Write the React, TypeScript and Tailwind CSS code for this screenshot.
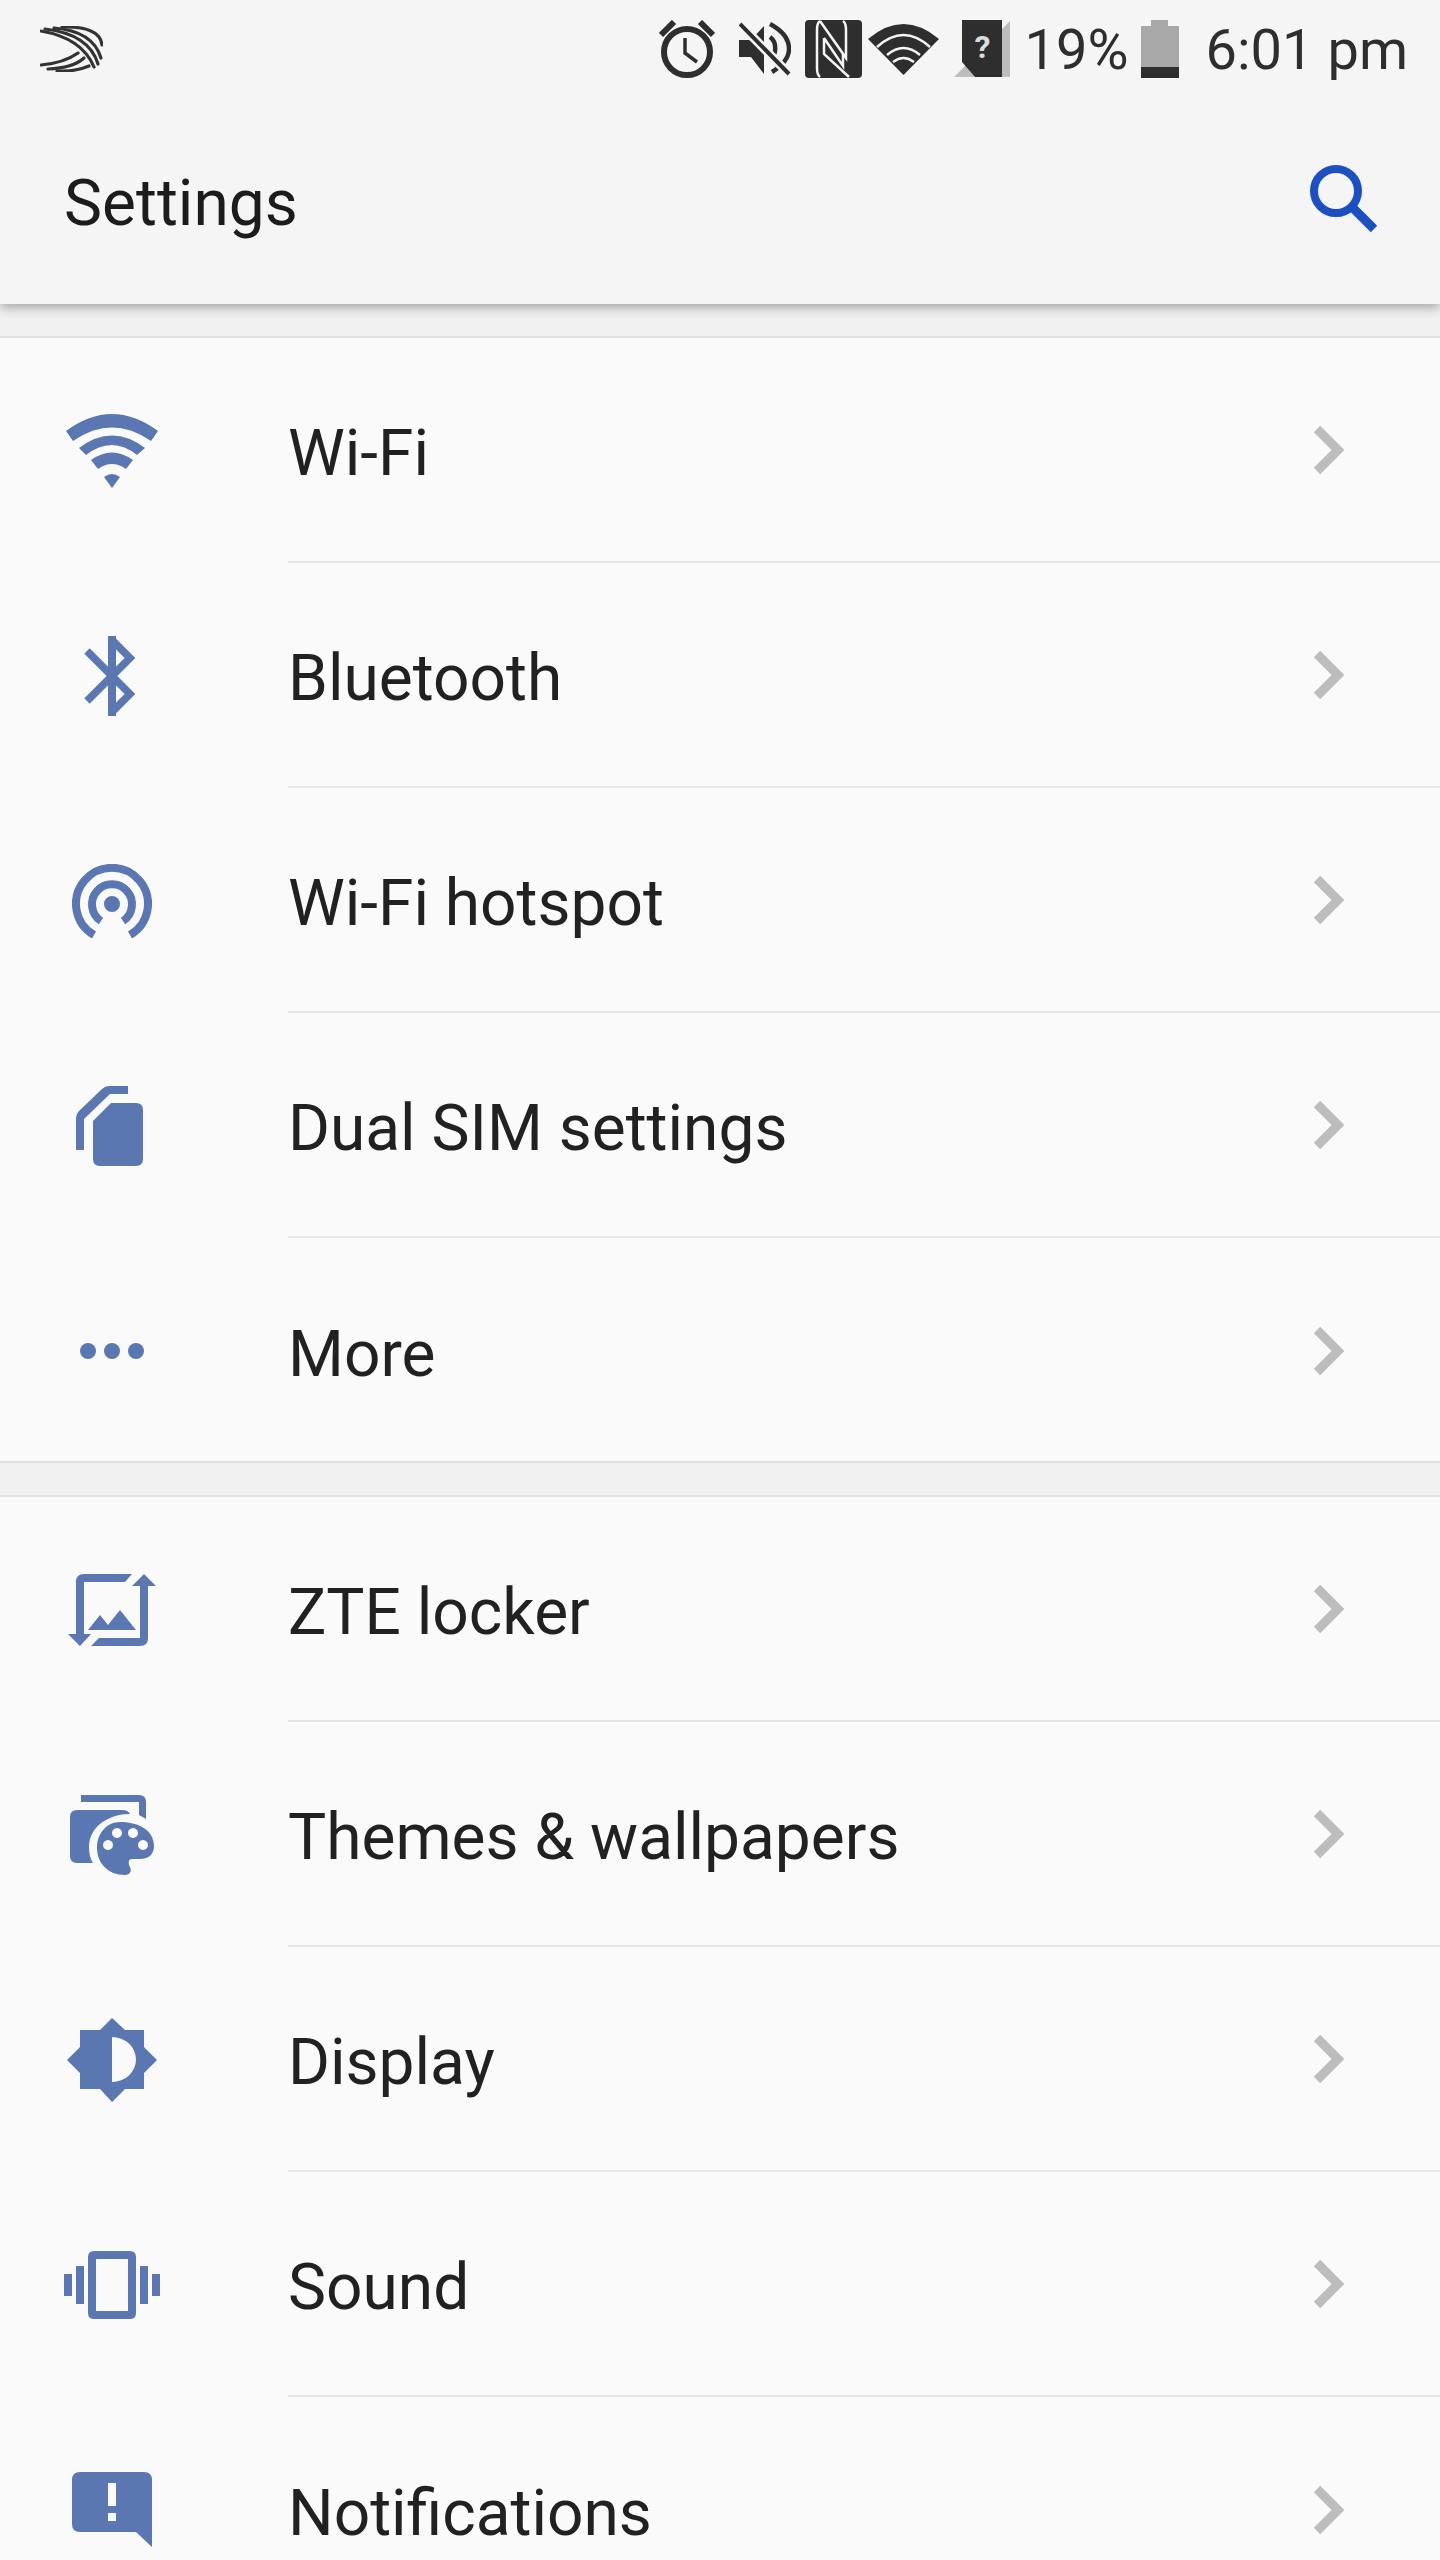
import React from 'react';

const iconColor = '#5b77b2';
const statusColor = '#2e2e2e';
const barBg = '#f5f5f5';

function WifiIcon() {
  return (
    <svg width="92" height="74" viewBox="0 0 92 74" fill={iconColor}>
      <path d="M0 17 Q46 -17 92 17 L85 27 Q46 0 7 27 Z" />
      <path d="M13 34 Q46 9 79 34 L71 41 Q46 21 20 41 Z" />
      <path d="M25 46 Q46 31 67 46 L60 55 Q46 45 32 55 Z" />
      <path d="M38 63 Q46 57 54 63 L46 74 Z" />
    </svg>
  );
}

function BluetoothIcon() {
  return (
    <svg width="56" height="80" viewBox="0 0 56 80" fill="none" stroke={iconColor} strokeWidth="7.5">
      <path d="M3 15 L46 58 L28 76" />
      <path d="M28 4 L46 22 L3 65" />
      <path d="M24 0 H32 V80 H24 Z" fill={iconColor} stroke="none" />
    </svg>
  );
}

function HotspotIcon() {
  return (
    <svg width="80" height="74" viewBox="0 0 80 74" fill="none" stroke={iconColor} strokeWidth="8">
      <path d="M22 71 A36 36 0 1 1 58 71" />
      <path d="M29 57 A20 20 0 1 1 51 57" />
      <circle cx="40" cy="40" r="8" fill={iconColor} stroke="none" />
    </svg>
  );
}

function SimIcon() {
  return (
    <svg width="72" height="80" viewBox="0 0 72 80" fill={iconColor}>
      <path d="M0 64 V32 Q0 28 3 25 L26 3 Q29 0 33 0 H52 V8 H34 L8 33 V64 Z" />
      <path d="M17 35 L35 17 H60 Q67 17 67 24 V73 Q67 80 60 80 H24 Q17 80 17 73 Z" />
    </svg>
  );
}

function MoreIcon() {
  return (
    <svg width="64" height="16" viewBox="0 0 64 16" fill={iconColor}>
      <circle cx="8" cy="8" r="8" />
      <circle cx="32" cy="8" r="8" />
      <circle cx="56" cy="8" r="8" />
    </svg>
  );
}

function LockerIcon() {
  return (
    <svg width="88" height="72" viewBox="0 0 88 72" fill={iconColor}>
      <path d="M8 60 V8 Q8 0 16 0 H64 L57 8 H16 V60 H23 L12 72 L0 60 Z" />
      <path d="M64 12 L76 0 L88 12 H80 V64 Q80 72 72 72 H23 L31 64 H72 V12 Z" />
      <path d="M20 56 L32 41 L40 51 L52 36 L68 56 Z" />
    </svg>
  );
}

function ThemesIcon() {
  return (
    <svg width="84" height="80" viewBox="0 0 84 80" fill={iconColor}>
      <path d="M11 0 H69 Q76 0 76 7 V24 L69 20 V7 H11 Z" />
      <path d="M7 15 H52 Q58 15 60 19 C38 19 19 32 19 52 Q19 62 23 68 H7 Q0 68 0 61 V22 Q0 15 7 15 Z" />
      <path fillRule="evenodd" d="M50 27 C70 27 84 36 84 51 C84 60 78 64 70 64 H62 C58 64 58 69 60 72 C62 76 60 80 55 80 C38 80 27 68 27 53 C27 38 37 27 50 27 Z M47 33 a5 5 0 1 0 0.01 0 Z M63 33 a5 5 0 1 0 0.01 0 Z M38 45 a5 5 0 1 0 0.01 0 Z M73 45 a5 5 0 1 0 0.01 0 Z" />
    </svg>
  );
}

function DisplayIcon() {
  return (
    <svg width="90" height="84" viewBox="0 0 90 84" fill={iconColor}>
      <path fillRule="evenodd" d="M45 0 L58 12 H77 V29 L90 42 L77 55 V71 H58 L45 84 L33 71 H13 V55 L0 42 L13 29 V12 H33 Z M45 19 V64 A24 22.5 0 0 0 45 19 Z" />
    </svg>
  );
}

function SoundIcon() {
  return (
    <svg width="96" height="68" viewBox="0 0 96 68" fill={iconColor}>
      <rect x="0" y="23" width="8" height="22" />
      <rect x="12" y="15" width="8" height="38" />
      <rect x="76" y="15" width="8" height="38" />
      <rect x="88" y="23" width="8" height="22" />
      <path fillRule="evenodd" d="M30 0 H66 Q72 0 72 6 V62 Q72 68 66 68 H30 Q24 68 24 62 V6 Q24 0 30 0 Z M32 8 V60 H64 V8 Z" />
    </svg>
  );
}

function NotificationsIcon() {
  return (
    <svg width="80" height="75" viewBox="0 0 80 75" fill={iconColor}>
      <path fillRule="evenodd" d="M8 0 H72 Q80 0 80 8 V75 L64 60 H8 Q0 60 0 52 V8 Q0 0 8 0 Z M36 11 V34 H44 V11 Z M36 41 V49 H44 V41 Z" />
    </svg>
  );
}

function Chevron() {
  return (
    <svg width="32" height="50" viewBox="0 0 32 50" fill="none" stroke="#bdbdbd" strokeWidth="9">
      <path d="M4 4 L25 25 L4 46" />
    </svg>
  );
}

function SwiftKeyIcon() {
  return (
    <svg width="63" height="46" viewBox="0 0 63 46" fill="none" stroke="#333333" strokeWidth="3.2" strokeLinecap="round">
      <path d="M1 5 Q42 12 54 41" />
      <path d="M5 3 Q49 8 58 38" />
      <path d="M14 2 Q53 5 61 32" />
      <path d="M22 1 Q60 0 62 19" />
      <path d="M1 39 Q24 37 38 27" />
      <path d="M8 43 Q33 42 44 32" />
      <path d="M17 45 Q35 46 49 40" />
    </svg>
  );
}

function AlarmIcon() {
  return (
    <svg width="56" height="58" viewBox="0 0 56 58" fill="none" stroke={statusColor} strokeWidth="6">
      <circle cx="28" cy="32" r="23" />
      <path d="M2 15 L15 2 M54 15 L41 2" />
      <path d="M26 18 V33 L38 42" strokeWidth="3.5" />
    </svg>
  );
}

function MuteIcon() {
  return (
    <svg width="52" height="54" viewBox="0 0 52 54" fill={statusColor}>
      <path d="M0 18 H12 L25 4 V52 L12 35 H0 Z" />
      <path d="M31 2 C46 10 50 20 50 27 C50 34 46 42 33 50" fill="none" stroke={statusColor} strokeWidth="4.5" />
      <path d="M31 15 C38 20 38 32 31 38" fill="none" stroke={statusColor} strokeWidth="4.5" />
      <path d="M1 2 L50 52" stroke={barBg} strokeWidth="9" />
      <path d="M1 2 L50 52" stroke={statusColor} strokeWidth="4" />
    </svg>
  );
}

function NfcIcon() {
  return (
    <svg width="57" height="58" viewBox="0 0 57 58">
      <rect width="57" height="58" rx="4" fill={statusColor} />
      <g fill="none" stroke={barBg} strokeWidth="2.5">
        <path d="M15 1 Q12 3 12 10 V48 Q12 55 15 57" />
        <path d="M15 1 L41 38 V10 Q41 3 38 1" />
        <path d="M19 18 V34 L44 57 M19 18 L38 46 V34" />
      </g>
    </svg>
  );
}

function StatusWifiIcon() {
  return (
    <svg width="71" height="51" viewBox="0 0 71 51" fill={statusColor}>
      <path d="M0 15 Q35.5 -15 71 15 L35.5 51 Z" />
      <g fill="none" stroke={barBg} strokeWidth="2.5">
        <path d="M9 23 Q35.5 -1 62 23" />
        <path d="M19 31 Q35.5 17 52 31" />
        <path d="M25 38 Q35.5 30 46 38" />
      </g>
    </svg>
  );
}

function SimUnknownIcon() {
  return (
    <div className="relative w-[56px] h-[58px]">
      <svg className="absolute inset-0" width="56" height="58" viewBox="0 0 56 58">
        <path d="M0 57 L12 45 L21 57 Z M48 9 L56 1 V57 H48 Z" fill="#bdbdbd" />
        <path d="M8 0 H48 V57 H21 L8 42 Z" fill={statusColor} />
      </svg>
      <span className="absolute left-[21px] top-[7px] text-[32px] leading-[40px] font-bold text-[#dcdcdc]">?</span>
    </div>
  );
}

function BatteryIcon() {
  return (
    <svg width="38" height="58" viewBox="0 0 38 58">
      <path d="M10 0 H27 V6 H38 V58 H0 V6 H10 Z" fill="#a8a8a8" />
      <rect x="0" y="47" width="38" height="11" fill={statusColor} />
    </svg>
  );
}

function SearchIcon() {
  return (
    <svg width="72" height="72" viewBox="0 0 72 72" fill="none" stroke="#1c4fc0" strokeWidth="8">
      <circle cx="28" cy="28" r="22" />
      <path d="M44 44 L66 66" strokeWidth="9" />
    </svg>
  );
}

const groupOne = [
  { label: 'Wi-Fi', icon: <WifiIcon /> },
  { label: 'Bluetooth', icon: <BluetoothIcon /> },
  { label: 'Wi-Fi hotspot', icon: <HotspotIcon /> },
  { label: 'Dual SIM settings', icon: <SimIcon /> },
  { label: 'More', icon: <MoreIcon /> },
];

const groupTwo = [
  { label: 'ZTE locker', icon: <LockerIcon /> },
  { label: 'Themes & wallpapers', icon: <ThemesIcon /> },
  { label: 'Display', icon: <DisplayIcon /> },
  { label: 'Sound', icon: <SoundIcon /> },
  { label: 'Notifications', icon: <NotificationsIcon /> },
];

function SettingRow({ label, icon, last }: { label: string; icon: React.ReactNode; last: boolean }) {
  return (
    <div className="flex h-[225px] items-stretch">
      <div className="w-[288px] shrink-0 flex items-center justify-center pr-[64px]">{icon}</div>
      <div className={`flex-1 flex items-center justify-between pr-[95px] ${last ? '' : 'border-b-2 border-[#e6e6e6]'}`}>
        <span className="text-[64px] leading-none text-[#212121] pt-[8px]">{label}</span>
        <Chevron />
      </div>
    </div>
  );
}

export default function App() {
  return (
    <div className="w-[1440px] h-[2560px] overflow-hidden bg-[#f1f1f1] font-['Roboto',sans-serif]">
      <header className="relative z-10 h-[304px] bg-[#f5f5f5] shadow-[0_4px_10px_rgba(0,0,0,0.3)]">
        <div className="flex h-[98px] items-center justify-between pl-[40px] pr-[32px]">
          <SwiftKeyIcon />
          <div className="flex items-center text-[#2e2e2e]">
            <AlarmIcon />
            <div className="ml-[24px]"><MuteIcon /></div>
            <div className="ml-[14px]"><NfcIcon /></div>
            <div className="ml-[6px]"><StatusWifiIcon /></div>
            <div className="ml-[15px]"><SimUnknownIcon /></div>
            <span className="ml-[15px] pt-[2px] text-[56px] leading-none">19%</span>
            <div className="ml-[12px]"><BatteryIcon /></div>
            <span className="ml-[27px] pt-[2px] text-[56px] leading-none">6:01 pm</span>
          </div>
        </div>
        <div className="flex h-[206px] items-center justify-between pl-[64px] pr-[60px]">
          <h1 className="text-[64px] leading-none font-normal text-[#1c1c1c] pt-[5px]">Settings</h1>
          <div className="mb-[5px]"><SearchIcon /></div>
        </div>
      </header>
      <div className="h-[32px]" />
      <section className="border-t-2 border-[#e2e2e2] bg-[#fafafa]">
        {groupOne.map((row, i) => (
          <SettingRow key={row.label} label={row.label} icon={row.icon} last={i === groupOne.length - 1} />
        ))}
      </section>
      <div className="-mt-[2px] h-[34px] border-t-2 border-[#e2e2e2] bg-[#f1f1f1]" />
      <section className="border-t-2 border-[#e2e2e2] bg-[#fafafa]">
        {groupTwo.map((row, i) => (
          <SettingRow key={row.label} label={row.label} icon={row.icon} last={i === groupTwo.length - 1} />
        ))}
      </section>
    </div>
  );
}
